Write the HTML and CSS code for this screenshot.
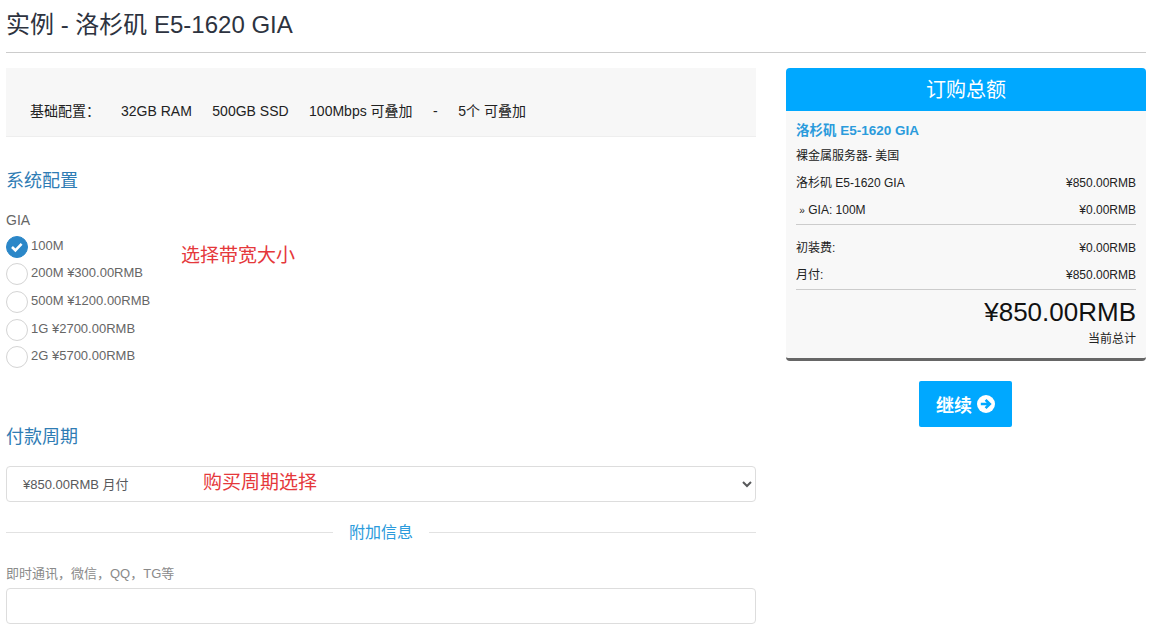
FILE: index.html
```html
<!DOCTYPE html>
<html lang="zh-CN">
<head>
<meta charset="utf-8">
<title>实例 - 洛杉矶 E5-1620 GIA</title>
<link rel="stylesheet" href="styles.css">
</head>
<body>
<main class="page">
  <h1 class="title">实例 - 洛杉矶 E5-1620 GIA</h1>
  <div class="columns">
    <section class="left">
      <div class="specs">
        <span class="spec-label">基础配置：</span>
        <span>32GB RAM</span>
        <span>500GB SSD</span>
        <span>100Mbps 可叠加</span>
        <span>-</span>
        <span>5个 可叠加</span>
      </div>
      <h2 class="section-title first">系统配置</h2>
      <div class="gia">
        <div class="gia-label">GIA</div>
        <div class="option short"><span class="radio checked"><svg viewBox="0 0 22 22" width="22" height="22"><path d="M6 11l3.4 3.3 6.2-6.4" fill="none" stroke="#fff" stroke-width="2.6"/></svg></span><span class="opt-text">100M</span></div>
        <div class="option"><span class="radio"></span><span class="opt-text">200M ¥300.00RMB</span></div>
        <div class="option"><span class="radio"></span><span class="opt-text">500M ¥1200.00RMB</span></div>
        <div class="option short"><span class="radio"></span><span class="opt-text">1G ¥2700.00RMB</span></div>
        <div class="option short"><span class="radio"></span><span class="opt-text">2G ¥5700.00RMB</span></div>
        <div class="note note-band">选择带宽大小</div>
      </div>
      <h2 class="section-title second">付款周期</h2>
      <div class="select-wrap">
        <select class="select"><option>¥850.00RMB 月付</option></select>
        <div class="note note-cycle">购买周期选择</div>
      </div>
      <div class="divider"><span>附加信息</span></div>
      <label class="field-label" for="im">即时通讯，微信，QQ，TG等</label>
      <input class="input" id="im" type="text">
    </section>
    <aside class="right">
      <div class="summary">
        <div class="summary-head">订购总额</div>
        <div class="summary-body">
          <div class="product">洛杉矶 E5-1620 GIA</div>
          <div class="group">裸金属服务器- 美国</div>
          <div class="row"><span>洛杉矶 E5-1620 GIA</span><span>¥850.00RMB</span></div>
          <div class="row sub"><span>&nbsp;<small>»</small> GIA: 100M</span><span>¥0.00RMB</span></div>
          <div class="rows-2">
            <div class="row"><span>初装费:</span><span>¥0.00RMB</span></div>
            <div class="row"><span>月付:</span><span>¥850.00RMB</span></div>
          </div>
          <div class="total">
            <div class="amount">¥850.00RMB</div>
            <div class="total-label">当前总计</div>
          </div>
        </div>
      </div>
      <div class="actions">
        <button class="continue" type="button">继续<svg viewBox="0 0 18 18" width="18" height="18"><circle cx="9" cy="9" r="9" fill="#fff"/><path d="M3.8 9h8.4M8.6 4.9L12.8 9l-4.2 4.1" fill="none" stroke="#00a8ff" stroke-width="2.6"/></svg></button>
      </div>
    </aside>
  </div>
</main>
</body>
</html>
```
FILE: styles.css
```css
* { box-sizing: border-box; }
html, body { margin: 0; background: #fff; }
body {
  font-family: "Liberation Sans", "Noto Sans CJK SC", sans-serif;
  font-size: 14px;
  color: #58595b;
  overflow: hidden;
  height: 637px;
}
.page { padding: 0 12px 0 6px; }
.title {
  margin: 0 0 15px;
  height: 53px;
  padding-top: 10px;
  padding-bottom: 12px;
  font-size: 24px;
  line-height: 30px;
  font-weight: 400;
  color: #2d3340;
  border-bottom: 1px solid #ccc;
}
.columns { display: flex; gap: 30px; align-items: flex-start; }
.left { width: 750px; flex: none; }
.right { width: 360px; flex: none; }
.specs {
  height: 69px;
  padding: 35px 0 0 24px;
  display: flex;
  gap: 20.5px;
  background: #f7f7f7;
  border-bottom: 1px solid #eee;
  font-size: 14px;
  line-height: 16px;
  color: #222;
}
.spec-label { width: 70px; margin-right: 0.5px; }
.section-title {
  margin: 0;
  font-size: 18px;
  line-height: 24px;
  font-weight: 400;
  color: #2f7cb4;
}
.section-title.first { margin-top: 32px; }
.section-title.second { margin-top: 39px; }
.gia { position: relative; margin-top: 19px; height: 174px; color: #666; }
.gia-label { font-size: 14px; line-height: 16px; margin-bottom: 7px; }
.option { display: flex; height: 28px; font-size: 13px; line-height: 16px; }
.option.short { height: 27px; }
.radio {
  width: 22px;
  height: 22px;
  flex: none;
  border-radius: 50%;
  border: 1px solid #d4d4d4;
  background: #fff;
  margin: 1px 3px 0 0;
}
.radio.checked { background: #2b87c8; border-color: #2b87c8; }
.radio svg { display: block; margin: -1px; }
.opt-text { margin-top: 3px; }
.note {
  position: absolute;
  font-size: 19px;
  line-height: 24px;
  color: #e5383b;
}
.note-band { left: 175px; top: 32px; }
.note-cycle { left: 197px; top: 5px; }
.select-wrap { position: relative; margin-top: 17px; }
.select {
  display: block;
  width: 100%;
  height: 36px;
  padding: 0 12px;
  font: 13px "Liberation Sans", "Noto Sans CJK SC", sans-serif;
  color: #58595b;
  background: #fff;
  border: 1px solid #ddd;
  border-radius: 4px;
}
.divider {
  display: flex;
  align-items: center;
  margin-top: 20px;
  height: 22px;
  font-size: 16px;
  color: #2b9bdc;
}
.divider::before, .divider::after {
  content: "";
  flex: 1;
  height: 1px;
  margin-bottom: 1px;
  background: #e2e2e2;
}
.divider span { padding: 0 16px; line-height: 22px; }
.field-label {
  display: block;
  margin-top: 22px;
  font-size: 13px;
  line-height: 16px;
  color: #8a8a8a;
}
.input {
  display: block;
  width: 100%;
  height: 36px;
  margin-top: 6px;
  background: #fff;
  border: 1px solid #ddd;
  border-radius: 4px;
}
.summary {
  border-radius: 4px;
  overflow: hidden;
  background: #f8f8f8;
  border-bottom: 3px solid #666;
}
.summary-head {
  height: 43px;
  background: #00a8ff;
  color: #fff;
  font-size: 20px;
  line-height: 44px;
  text-align: center;
}
.summary-body { padding: 11px 10px 12px; color: #222; font-size: 12px; line-height: 16px; }
.product { font-size: 13.5px; font-weight: 700; color: #2b9bdc; line-height: 18px; }
.group { margin-top: 8px; line-height: 16px; }
.row { display: flex; justify-content: space-between; margin-top: 11px; }
.row.sub { margin-top: 11px; padding-bottom: 5px; }
.rows-2 { border-top: 1px solid #ccc; padding: 0 0 6px; border-bottom: 1px solid #ccc; }
.rows-2 .row:first-child { margin-top: 15px; }
.total { text-align: right; }
.amount { font-size: 26px; line-height: 30px; color: #111; margin-top: 7px; }
.total-label { margin-top: 5px; line-height: 14px; }
.actions { display: flex; justify-content: center; margin-top: 20px; padding-right: 1px; }
.continue {
  display: flex;
  align-items: center;
  gap: 5px;
  width: 93px;
  height: 46px;
  padding: 0 0 0 17px;
  border: 0;
  border-radius: 2px;
  background: #00a8ff;
  color: #fff;
  font: 700 18px "Liberation Sans", "Noto Sans CJK SC", sans-serif;
}
```
